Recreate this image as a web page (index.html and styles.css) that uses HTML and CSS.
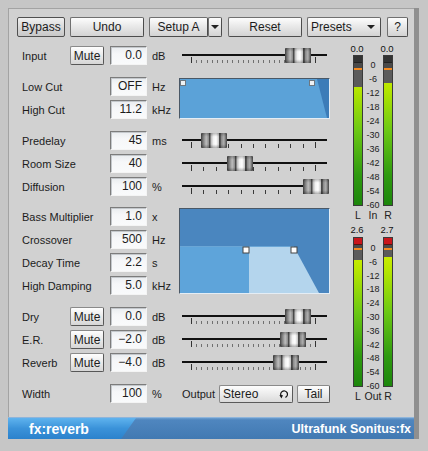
FILE: index.html
```html
<!DOCTYPE html>
<html>
<head>
<meta charset="utf-8">
<title>fx:reverb</title>
<link rel="stylesheet" href="styles.css">
</head>
<body>
<div class="window">
  <div class="panel">
    <div class="toolbar">
      <button class="tb bypass">Bypass</button>
      <button class="tb undo">Undo</button>
      <button class="tb setupa">Setup A</button>
      <button class="tb arrowbtn"><span class="tri"></span></button>
      <button class="tb reset">Reset</button>
      <button class="tb presets"><span>Presets</span><span class="tri"></span></button>
      <button class="tb help">?</button>
    </div>
    <div class="body">
      <div class="controls">
        <div class="group">
          <div class="lbl">Input</div>
          <button class="mute">Mute</button>
          <div class="val">0.0</div>
          <div class="unit">dB</div>
          <div class="slider dense"><div class="track"></div><div class="ticks"></div><div class="thumb" style="left:105px"></div></div>
        </div>

        <div class="group g2">
          <div class="graph filter">
            <svg width="149" height="39" viewBox="0 0 149 39">
              <rect x="0" y="0" width="149" height="39" fill="#5ba2d8"/>
              <polygon points="137,0 149,0 149,39 147,39" fill="#3c7cb8"/>
              <rect x="0.5" y="1.5" width="5" height="5" fill="#eef2f5" stroke="#6d7780" stroke-width="1"/>
              <rect x="129.5" y="1.5" width="5" height="5" fill="#eef2f5" stroke="#6d7780" stroke-width="1"/>
            </svg>
          </div>
          <div class="lbl wide">Low Cut</div>
          <div class="val">OFF</div>
          <div class="unit">Hz</div>
          <div class="lbl wide">High Cut</div>
          <div class="val">11.2</div>
          <div class="unit">kHz</div>
        </div>

        <div class="group g3">
          <div class="lbl wide">Predelay</div>
          <div class="val">45</div>
          <div class="unit">ms</div>
          <div class="slider sparse"><div class="track"></div><div class="ticks"></div><div class="thumb" style="left:21px"></div></div>
          <div class="lbl wide">Room Size</div>
          <div class="val">40</div>
          <div class="unit"></div>
          <div class="slider sparse"><div class="track"></div><div class="ticks"></div><div class="thumb" style="left:47px"></div></div>
          <div class="lbl wide">Diffusion</div>
          <div class="val">100</div>
          <div class="unit">%</div>
          <div class="slider sparse"><div class="track"></div><div class="ticks"></div><div class="thumb" style="left:123px"></div></div>
        </div>

        <div class="group g4">
          <div class="graph decay">
            <svg width="149" height="84" viewBox="0 0 149 84">
              <rect x="0" y="0" width="149" height="84" fill="#4a86bf"/>
              <rect x="0" y="38" width="69" height="46" fill="#5ea4da"/>
              <polygon points="69,38 114,38 139,84 69,84" fill="#b4d5ed"/>
              <line x1="0" y1="37.5" x2="114" y2="37.5" stroke="#6aa6d6" stroke-width="1"/>
              <rect x="63" y="38" width="6" height="6" fill="#ffffff" stroke="#444" stroke-width="1"/>
              <rect x="111" y="38" width="6" height="6" fill="#ffffff" stroke="#444" stroke-width="1"/>
            </svg>
          </div>
          <div class="lbl wide">Bass Multiplier</div>
          <div class="val">1.0</div>
          <div class="unit">x</div>
          <div class="lbl wide">Crossover</div>
          <div class="val">500</div>
          <div class="unit">Hz</div>
          <div class="lbl wide">Decay Time</div>
          <div class="val">2.2</div>
          <div class="unit">s</div>
          <div class="lbl wide">High Damping</div>
          <div class="val">5.0</div>
          <div class="unit">kHz</div>
        </div>

        <div class="group g5">
          <div class="lbl">Dry</div>
          <button class="mute">Mute</button>
          <div class="val">0.0</div>
          <div class="unit">dB</div>
          <div class="slider dense"><div class="track"></div><div class="ticks"></div><div class="thumb" style="left:105px"></div></div>
          <div class="lbl">E.R.</div>
          <button class="mute">Mute</button>
          <div class="val">−2.0</div>
          <div class="unit">dB</div>
          <div class="slider dense"><div class="track"></div><div class="ticks"></div><div class="thumb" style="left:100px"></div></div>
          <div class="lbl">Reverb</div>
          <button class="mute">Mute</button>
          <div class="val">−4.0</div>
          <div class="unit">dB</div>
          <div class="slider dense"><div class="track"></div><div class="ticks"></div><div class="thumb" style="left:93px"></div></div>
        </div>

        <div class="group g6">
          <div class="lbl wide">Width</div>
          <div class="val">100</div>
          <div class="unit">%</div>
          <div class="output">
            <span class="outlbl">Output</span>
            <div class="select"><span>Stereo</span>
              <svg class="cycle" width="9" height="11" viewBox="0 0 9 11">
                <path d="M2.4 8.4 A3.4 3.4 0 1 1 6.4 9.4" fill="none" stroke="#111" stroke-width="1.2"/>
                <polygon points="0.4,7 4,7.2 2.4,10.4" fill="#111"/>
              </svg>
            </div>
            <button class="tail">Tail</button>
          </div>
        </div>
      </div>

      <div class="meters">
        <div class="mgroup m1">
          <div class="mval">0.0</div><div></div><div class="mval">0.0</div>
          <div class="bar"><div class="cap"></div><div class="off" style="height:24px"></div></div>
          <div class="scale s1"><span>0</span><span>-6</span><span>-12</span><span>-18</span><span>-24</span><span>-30</span><span>-36</span><span>-42</span><span>-48</span><span>-54</span><span>-60</span></div>
          <div class="bar"><div class="cap"></div><div class="off" style="height:20px"></div></div>
          <div class="mlbl">L</div><div class="mlbl">In</div><div class="mlbl">R</div>
        </div>
        <div class="mgroup m2">
          <div class="mval">2.6</div><div></div><div class="mval">2.7</div>
          <div class="bar"><div class="cap clip"></div><div class="off out" style="height:15px"></div></div>
          <div class="scale s2"><span>0</span><span>-6</span><span>-12</span><span>-18</span><span>-24</span><span>-30</span><span>-36</span><span>-42</span><span>-48</span><span>-54</span><span>-60</span></div>
          <div class="bar"><div class="cap clip"></div><div class="off out" style="height:12px"></div></div>
          <div class="mlbl">L</div><div class="mlbl">Out</div><div class="mlbl">R</div>
        </div>
      </div>
    </div>
  </div>
  <div class="footer">
    <div class="tab"><span>fx:reverb</span></div>
    <div class="brand">Ultrafunk Sonitus:fx</div>
  </div>
</div>
</body>
</html>
```

FILE: styles.css
```css
* { box-sizing: border-box; }
html, body { margin: 0; padding: 0; }
body {
  width: 428px;
  height: 451px;
  overflow: hidden;
  background: #c6c6c6;
  font-family: "Liberation Sans", Arial, sans-serif;
  color: #1c1c1c;
}
button { font-family: inherit; color: inherit; margin: 0; }

.window {
  margin: 8px 0 0 8px;
  width: 411px;
  border-right: 5px solid #8f8f8f;
}
.panel {
  height: 409px;
  background: #d1d1d1;
  border-top: 1px solid #a3a3a3;
  border-left: 1px solid #a3a3a3;
  padding: 8px 0 12px 0;
}

/* toolbar */
.toolbar {
  display: flex;
  height: 20px;
  padding-left: 8px;
  margin-bottom: 7px;
}
.tb {
  height: 20px;
  padding: 0;
  font-size: 12px;
  background: linear-gradient(#fdfdfd, #e9e9e9 45%, #d3d3d3);
  border: 1px solid #707070;
  border-right-color: #4c4c4c;
  border-bottom-color: #4c4c4c;
  border-radius: 2px;
  display: flex;
  align-items: center;
  justify-content: center;
}
.bypass { width: 48px; margin-right: 5px; background: linear-gradient(#f0f0f0, #dadada 50%, #c8c8c8); border-color: #505050; }
.undo { width: 74px; margin-right: 5px; }
.setupa { width: 59px; }
.arrowbtn { width: 14px; margin-right: 6px; }
.reset { width: 74px; margin-right: 5px; }
.presets { width: 74px; margin-right: 6px; justify-content: space-between; padding: 0 5px 0 3px; }
.help { width: 21px; }
.tri {
  width: 0; height: 0;
  border-left: 4px solid transparent;
  border-right: 4px solid transparent;
  border-top: 4px solid #222;
  display: block;
}

/* body */
.body { display: flex; }
.controls { width: 321px; padding-left: 13px; }

.group {
  display: grid;
  grid-template-columns: 48px 36px 44px 30px 150px;
  grid-auto-rows: 23px;
  align-items: center;
}
.g2, .g3, .g5, .g6 { margin-top: 8px; }
.g4 { margin-top: 7px; }

.lbl { font-size: 11px; white-space: nowrap; grid-column: 1; }
.lbl.wide { grid-column: 1 / span 2; }
.mute {
  width: 34px;
  height: 19px;
  padding: 0;
  font-size: 12px;
  background: linear-gradient(#fefefe, #ececec 45%, #d6d6d6);
  border: 1px solid #8a8a8a;
  border-right-color: #575757;
  border-bottom-color: #575757;
  border-radius: 2px;
}
.val {
  grid-column: 3;
  margin-left: 4px;
  width: 37px;
  height: 19px;
  font-size: 12px;
  line-height: 17px;
  text-align: right;
  padding-right: 4px;
  background: linear-gradient(#e9ecef, #f6f7f9 40%, #f9fafb);
  border: 1px solid #f4f4f4;
  border-top-color: #7c7c7c;
  border-left-color: #7c7c7c;
  box-shadow: inset 1px 1px 0 #c4c8cc;
}
.unit { grid-column: 4; font-size: 11px; padding-left: 2px; }

/* sliders */
.slider {
  grid-column: 5;
  position: relative;
  height: 23px;
  align-self: stretch;
}
.track {
  margin: 10px 3px 0 2px;
  height: 2px;
  background: #111;
}
.ticks {
  position: relative;
  margin: 2px 0 0 11px;
  width: 125px;
  height: 5px;
}
.sparse .ticks {
  background: repeating-linear-gradient(to right, #3a3a3a 0 1px, transparent 1px 12.4px);
  background-size: 125px 4px;
  background-repeat: no-repeat;
  background-position: 0 bottom;
}
.dense .ticks {
  margin-top: 3px;
  height: 4px;
  background: repeating-linear-gradient(to right, #707070 0 1px, transparent 1px 5.1667px);
  background-size: 125px 3px;
  background-repeat: no-repeat;
  background-position: 0 bottom;
}
.ticks::before, .ticks::after {
  content: "";
  position: absolute;
  bottom: 0;
  width: 1px;
  height: 6px;
  background: #333;
}
.ticks::before { left: 0; }
.ticks::after { left: 124px; }

.thumb {
  position: absolute;
  top: 4px;
  width: 26px;
  height: 15px;
  background:
    linear-gradient(rgba(0,0,0,0.25), rgba(0,0,0,0) 25%, rgba(0,0,0,0) 75%, rgba(0,0,0,0.3)),
    linear-gradient(to right, #3e3e3e 0, #7a7a7a 8%, #bdbdbd 20%, #8c8c8c 30%, #2a2a2a 34%, #b8b8b8 38%, #f2f2f2 48%, #ffffff 58%, #c9c9c9 68%, #262626 72%, #8a8a8a 78%, #b0b0b0 88%, #444 100%);
  border-radius: 1px;
}

/* graphs */
.graph {
  grid-column: 5;
  margin-left: -1px;
  width: 151px;
  border: 1px solid #e4edf5;
  border-top-color: #4a5866;
  border-left-color: #4a5866;
  line-height: 0;
}
.graph svg { display: block; }
.filter { grid-row: 1 / span 2; height: 41px; }
.decay { grid-row: 1 / span 4; height: 86px; align-self: center; }

/* output row */
.output {
  grid-column: 5;
  display: flex;
  align-items: center;
  padding-left: 2px;
}
.outlbl { font-size: 11px; width: 37px; }
.select {
  width: 74px;
  height: 18px;
  margin-right: 4px;
  display: flex;
  align-items: center;
  justify-content: space-between;
  padding: 0 4px 0 3px;
  font-size: 12px;
  background: linear-gradient(#fdfdfd, #ececec 50%, #dadada);
  border: 1px solid #8a8a8a;
  border-right-color: #5a5a5a;
  border-bottom-color: #5a5a5a;
  border-radius: 2px;
}
.cycle { display: block; }
.tail {
  width: 33px;
  height: 18px;
  padding: 0;
  font-size: 12px;
  background: linear-gradient(#fdfdfd, #ececec 50%, #d8d8d8);
  border: 1px solid #8a8a8a;
  border-right-color: #5a5a5a;
  border-bottom-color: #5a5a5a;
  border-radius: 2px;
}

/* meters */
.meters { margin-left: 23px; }
.mgroup {
  display: grid;
  grid-template-columns: 10px 20px 10px;
}
.m1 { grid-template-rows: 11px 151px 12px; }
.m2 { grid-template-rows: 12px 150px 12px; margin-top: 7px; }
.mval {
  margin: 0 -8px 0 -10px;
  text-align: center;
  font-size: 9.5px;
  line-height: 10px;
  color: #111;
}
.bar {
  border: 1px solid #3a3a3a;
  background: linear-gradient(#e3f300 0%, #b6e600 22%, #6cc814 50%, #2f9a10 80%, #1d860c 100%);
  display: flex;
  flex-direction: column;
}
.cap {
  height: 7px;
  background: #333;
  border-bottom: 1px solid #222;
  flex: none;
}
.cap.clip { height: 7px; background: #c9161b; border-bottom-color: #5a1010; }
.off {
  flex: none;
  background: linear-gradient(#4a4a4a 0 5px, #f58a1f 5px 7px, #5b5b5b 7px);
}
.off.out {
  background: linear-gradient(#4a4a4a 0 3px, #f58a1f 3px 5px, #5b5b5b 5px);
}
.scale {
  display: flex;
  flex-direction: column;
  justify-content: space-between;
  align-items: center;
  font-size: 9px;
  line-height: 8px;
  color: #222;
  margin-bottom: -3px;
}
.s1 { padding-top: 6px; height: 154px; }
.s2 { padding-top: 7px; height: 153px; }
.scale span { white-space: nowrap; }
.mlbl {
  margin: 0 -8px;
  text-align: center;
  font-size: 10.5px;
  line-height: 10px;
  color: #222;
}
.m1 .mlbl { margin-top: 4px; }
.m2 .mlbl { margin-top: 4px; }

/* footer */
.footer {
  display: flex;
  align-items: center;
  height: 22px;
  background: linear-gradient(#6d9fd0 0, #4f86bf 2px, #4179b2 100%);
  border-top: 1px solid #8fb5db;
  color: #fff;
  font-weight: bold;
}
.tab {
  align-self: stretch;
  width: 128px;
  background: linear-gradient(#5fb3ee, #3a92d9 50%, #2b82cc);
  clip-path: polygon(0 0, 128px 0, 113px 100%, 0 100%);
  display: flex;
  align-items: center;
  padding-left: 21px;
  font-size: 14px;
}
.brand {
  margin-left: auto;
  padding-right: 3px;
  font-size: 12.5px;
}
```
